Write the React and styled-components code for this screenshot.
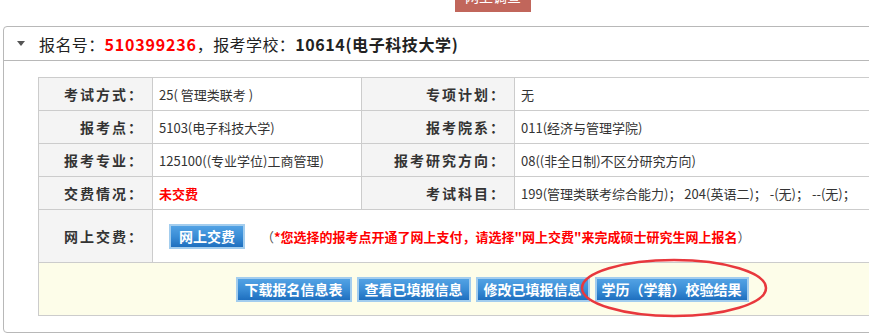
import React from "react";
import styled, { createGlobalStyle } from "styled-components";

const Global = createGlobalStyle`
  html, body { margin: 0; padding: 0; overflow: hidden; background: #fff; }
  body { font-family: "Noto Sans CJK SC", "Noto Sans", sans-serif; color: #333; }
`;

const TopStrip = styled.div`
  height: 12px;
  overflow: hidden;
  display: flex;
  align-items: flex-end;
  padding-left: 455px;
`;

const SurveyButton = styled.div`
  width: 76px;
  height: 26px;
  line-height: 21px;
  background: #c1665b;
  color: #fff;
  font-size: 14px;
  text-align: center;
  overflow: hidden;
`;

const Panel = styled.div`
  margin: 14px 0 0 3px;
  width: 1000px;
  border: 1px solid #b8b8b8;
  border-radius: 4px;
  box-sizing: border-box;
`;

const PanelHeader = styled.div`
  height: 33px;
  border-bottom: 1px solid #b8b8b8;
  display: flex;
  align-items: center;
  padding-left: 13px;
  font-size: 16px;
  letter-spacing: 0.4px;
  color: #222;
`;

const Caret = styled.span`
  width: 0;
  height: 0;
  border-left: 4px solid transparent;
  border-right: 4px solid transparent;
  border-top: 5px solid #555;
  margin-right: 14px;
`;

const Red = styled.span`
  color: #f00;
  font-weight: bold;
  letter-spacing: 0.8px;
`;

const Bold = styled.span`
  font-weight: bold;
  letter-spacing: 0.6px;
`;

const PanelBody = styled.div`
  padding: 16px 0 16px 34px;
`;

const Table = styled.table`
  width: 908px;
  border-collapse: collapse;
  table-layout: fixed;
`;

const Row = styled.tr`
  height: ${(p) => p.$h || 33}px;
`;

const Label = styled.td`
  background: #f4f4f4;
  border: 1px solid #ccc;
  text-align: right;
  padding: 0 8px 0 0;
  font-size: 14px;
  font-weight: bold;
  letter-spacing: 2px;
  color: #333;
  white-space: nowrap;
`;

const Value = styled.td`
  border: 1px solid #ccc;
  padding: 0 0 0 6px;
  font-size: 13px;
  color: ${(p) => (p.$red ? "#f00" : "#333")};
  font-weight: ${(p) => (p.$red ? "bold" : "normal")};
  white-space: nowrap;
  overflow: hidden;
`;

const PayCell = styled.td`
  border: 1px solid #ccc;
  padding: 0 0 0 16px;
  font-size: 13px;
  white-space: nowrap;
  overflow: hidden;
`;

const PayLine = styled.div`
  display: flex;
  align-items: center;
`;

const Note = styled.span`
  margin-left: 16px;
  color: #555;
`;

const NoteRed = styled.span`
  color: #f00;
  font-weight: bold;
`;

const ActionCell = styled.td`
  border: 1px solid #ccc;
  background: #fdfde9;
  text-align: center;
  padding: 0;
`;

const ActionWrap = styled.div`
  position: relative;
  display: inline-flex;
  gap: 5px;
  align-items: center;
`;

const BlueButton = styled.button`
  height: 25px;
  padding: 0 ${(p) => p.$pad || 7}px;
  border: 2px solid #a3cdee;
  background: linear-gradient(#52a2e4 0%, #3a8dd6 50%, #1e6fbf 100%);
  color: #fff;
  font-family: "Noto Sans CJK SC", sans-serif;
  font-size: 14px;
  font-weight: bold;
  line-height: 21px;
  cursor: pointer;
  white-space: nowrap;
`;

const Ellipse = styled.svg`
  position: absolute;
  left: 344px;
  top: -19px;
  width: 188px;
  height: 60px;
  pointer-events: none;
  overflow: visible;
`;

export default function App() {
  return (
    <>
      <Global />
      <TopStrip>
        <SurveyButton>网上调查</SurveyButton>
      </TopStrip>
      <Panel>
        <PanelHeader>
          <Caret />
          报名号：<Red>510399236</Red>，报考学校：<Bold>10614(电子科技大学)</Bold>
        </PanelHeader>
        <PanelBody>
          <Table>
            <colgroup>
              <col style={{ width: 114 }} />
              <col style={{ width: 209 }} />
              <col style={{ width: 153 }} />
              <col />
            </colgroup>
            <tbody>
              <Row>
                <Label>考试方式：</Label>
                <Value>25( 管理类联考 )</Value>
                <Label>专项计划：</Label>
                <Value>无</Value>
              </Row>
              <Row>
                <Label>报考点：</Label>
                <Value>5103(电子科技大学)</Value>
                <Label>报考院系：</Label>
                <Value>011(经济与管理学院)</Value>
              </Row>
              <Row>
                <Label>报考专业：</Label>
                <Value>125100((专业学位)工商管理)</Value>
                <Label>报考研究方向：</Label>
                <Value>08((非全日制)不区分研究方向)</Value>
              </Row>
              <Row>
                <Label>交费情况：</Label>
                <Value $red>未交费</Value>
                <Label>考试科目：</Label>
                <Value>199(管理类联考综合能力)； 204(英语二)； -(无)； --(无)；</Value>
              </Row>
              <Row $h={53}>
                <Label>网上交费：</Label>
                <PayCell colSpan={3}>
                  <PayLine>
                    <BlueButton $pad={8}>网上交费</BlueButton>
                    <Note>
                      （<NoteRed>*您选择的报考点开通了网上支付，请选择"网上交费"来完成硕士研究生网上报名</NoteRed>）
                    </Note>
                  </PayLine>
                </PayCell>
              </Row>
              <Row $h={53}>
                <ActionCell colSpan={4}>
                  <ActionWrap>
                    <BlueButton $pad={7}>下载报名信息表</BlueButton>
                    <BlueButton $pad={6}>查看已填报信息</BlueButton>
                    <BlueButton $pad={6}>修改已填报信息</BlueButton>
                    <BlueButton $pad={5}>学历（学籍）校验结果</BlueButton>
                    <Ellipse viewBox="0 0 188 60">
                      <ellipse cx="94" cy="30" rx="92" ry="28" fill="none" stroke="#e8383d" strokeWidth="2.5" />
                    </Ellipse>
                  </ActionWrap>
                </ActionCell>
              </Row>
            </tbody>
          </Table>
        </PanelBody>
      </Panel>
    </>
  );
}
